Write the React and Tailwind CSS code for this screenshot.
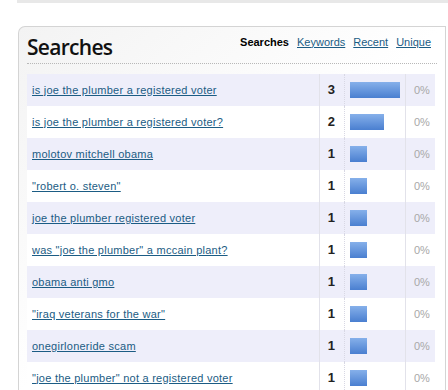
const rows = [
  { q: "is joe the plumber a registered voter", n: 3 },
  { q: "is joe the plumber a registered voter?", n: 2 },
  { q: "molotov mitchell obama", n: 1 },
  { q: "\"robert o. steven\"", n: 1 },
  { q: "joe the plumber registered voter", n: 1 },
  { q: "was \"joe the plumber\" a mccain plant?", n: 1 },
  { q: "obama anti gmo", n: 1 },
  { q: "\"iraq veterans for the war\"", n: 1 },
  { q: "onegirloneride scam", n: 1 },
  { q: "\"joe the plumber\" not a registered voter", n: 1 },
];

export default function App() {
  return (
    <div className="w-[448px] h-[390px] bg-white overflow-hidden font-['Liberation_Sans',Arial,sans-serif]">
      {/* strip from the block above */}
      <div className="ml-[17px] h-[3px] bg-[#e8e8e8]" />

      <div className="mt-[23px] ml-[18px] w-[428px] border-l border-t border-r border-[#d4d4d4] rounded-tl-[7px] bg-gradient-to-br from-[#f3f3f3] via-white to-white">
        {/* HEADER */}
        <div className="mx-[8px] h-[37px] flex items-end justify-between border-b border-dotted border-[#b8b8b8]">
          <h2 className="font-['Open_Sans',sans-serif] font-semibold text-[21px] leading-none pb-[5px] text-[#111] tracking-[-0.7px]">
            Searches
          </h2>
          <div className="flex gap-[8px] text-[11px] pb-[13px] pr-[6px]">
            <span className="font-bold text-black">Searches</span>
            <a className="underline text-[#1b5c84]">Keywords</a>
            <a className="underline text-[#1b5c84]">Recent</a>
            <a className="underline text-[#1b5c84]">Unique</a>
          </div>
        </div>

        {/* ROWS */}
        <div className="mt-[10px] ml-[8px] w-[408px]">
          {rows.map((r, idx) => (
            <div
              key={idx}
              className={`flex h-[32px] text-[11px] ${idx % 2 === 0 ? "bg-[#eeeefa]" : "bg-white"}`}
            >
              <div className="w-[292px] pl-[5px] flex items-center">
                <a className="underline text-[#1b5c84] whitespace-nowrap tracking-[0.25px]">{r.q}</a>
              </div>
              <div className="w-[25px] border-l border-[#e2e2ea] flex items-center justify-end pr-[9px] font-bold text-[13px] text-[#222]">
                {r.n}
              </div>
              <div className="w-[61px] border-l border-dotted border-[#d8d8e4] flex items-center pl-[5px]">
                <div
                  className="h-[16px] bg-gradient-to-b from-[#86b0ea] to-[#4a7fd0]"
                  style={{ width: r.n === 3 ? 50 : r.n === 2 ? 34 : 17 }}
                />
              </div>
              <div className="flex-1 border-l border-[#e2e2ea] flex items-center pl-[8px] text-[#a8a8a8]">
                0%
              </div>
            </div>
          ))}
        </div>
      </div>
    </div>
  );
}
